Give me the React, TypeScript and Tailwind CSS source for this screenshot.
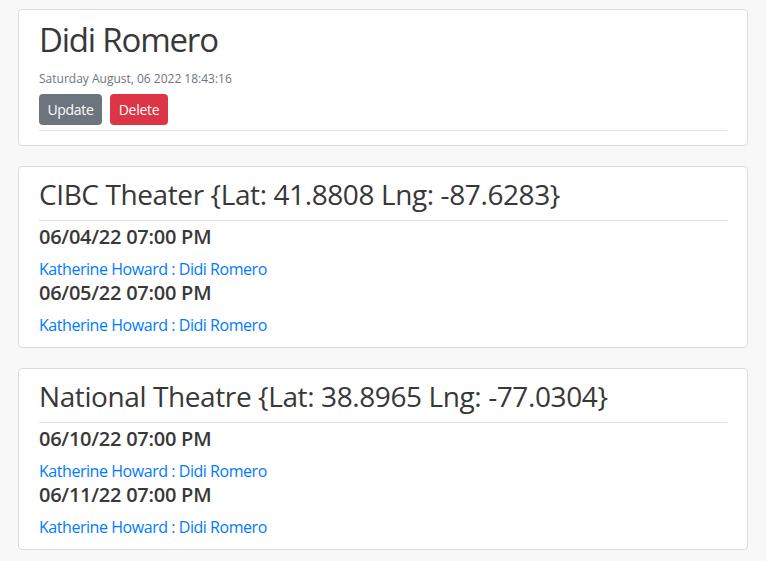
import React from 'react';

type Show = { date: string; cast: string };
type Venue = { name: string; lat: string; lng: string; shows: Show[] };

const venues: Venue[] = [
    {
        name: 'CIBC Theater',
        lat: '41.8808',
        lng: '-87.6283',
        shows: [
            { date: '06/04/22 07:00 PM', cast: 'Katherine Howard : Didi Romero' },
            { date: '06/05/22 07:00 PM', cast: 'Katherine Howard : Didi Romero' },
        ],
    },
    {
        name: 'National Theatre',
        lat: '38.8965',
        lng: '-77.0304',
        shows: [
            { date: '06/10/22 07:00 PM', cast: 'Katherine Howard : Didi Romero' },
            { date: '06/11/22 07:00 PM', cast: 'Katherine Howard : Didi Romero' },
        ],
    },
];

const font = { fontFamily: '"Open Sans", "Noto Sans", Arial, sans-serif' };

export default function App() {
    return (
        <div className="min-h-screen bg-[#f8f8f8] px-[18px] pt-[9px] pb-5 text-[#383838]" style={font}>
            {/* Performer header */}
            <div className="bg-white border border-[#dcdcdc] rounded px-5 pt-[10px] pb-[14px]">
                <h1 className="text-[33px] leading-[40px] font-medium tracking-[-1.2px]">Didi Romero</h1>
                <p className="mt-[10px] text-[12px] leading-[18px] text-[#6c757d]">Saturday August, 06 2022 18:43:16</p>
                <div className="mt-[6px] flex gap-2">
                    <button className="h-[31px] w-[63px] rounded bg-[#6c757d] text-white text-[14px] tracking-[-0.3px]">Update</button>
                    <button className="h-[31px] w-[58px] rounded bg-[#dc3545] text-white text-[14px] tracking-[-0.3px]">Delete</button>
                </div>
                <hr className="mt-[5px] border-t border-[#e0e0e0]" />
            </div>

            {venues.map(v => (
                <div key={v.name} className="mt-5 bg-white border border-[#dcdcdc] rounded px-5 pt-[10px] pb-[10px]">
                    <h3 className="text-[28px] leading-[34px] font-medium tracking-[-0.4px]">
                        {v.name} {'{'}Lat: {v.lat} Lng: {v.lng}{'}'}
                    </h3>
                    <hr className="mt-[9px] border-t border-[#e0e0e0]" />
                    <div className="mt-1">
                        {v.shows.map((s, i) => (
                            <div key={i}>
                                <h5 className="text-[20px] leading-[24px] font-semibold tracking-[-0.25px] mb-2">{s.date}</h5>
                                <a href="#" className="block text-[16px] leading-[24px] tracking-[-0.45px] text-[#007bff]">{s.cast}</a>
                            </div>
                        ))}
                    </div>
                </div>
            ))}
        </div>
    );
}
